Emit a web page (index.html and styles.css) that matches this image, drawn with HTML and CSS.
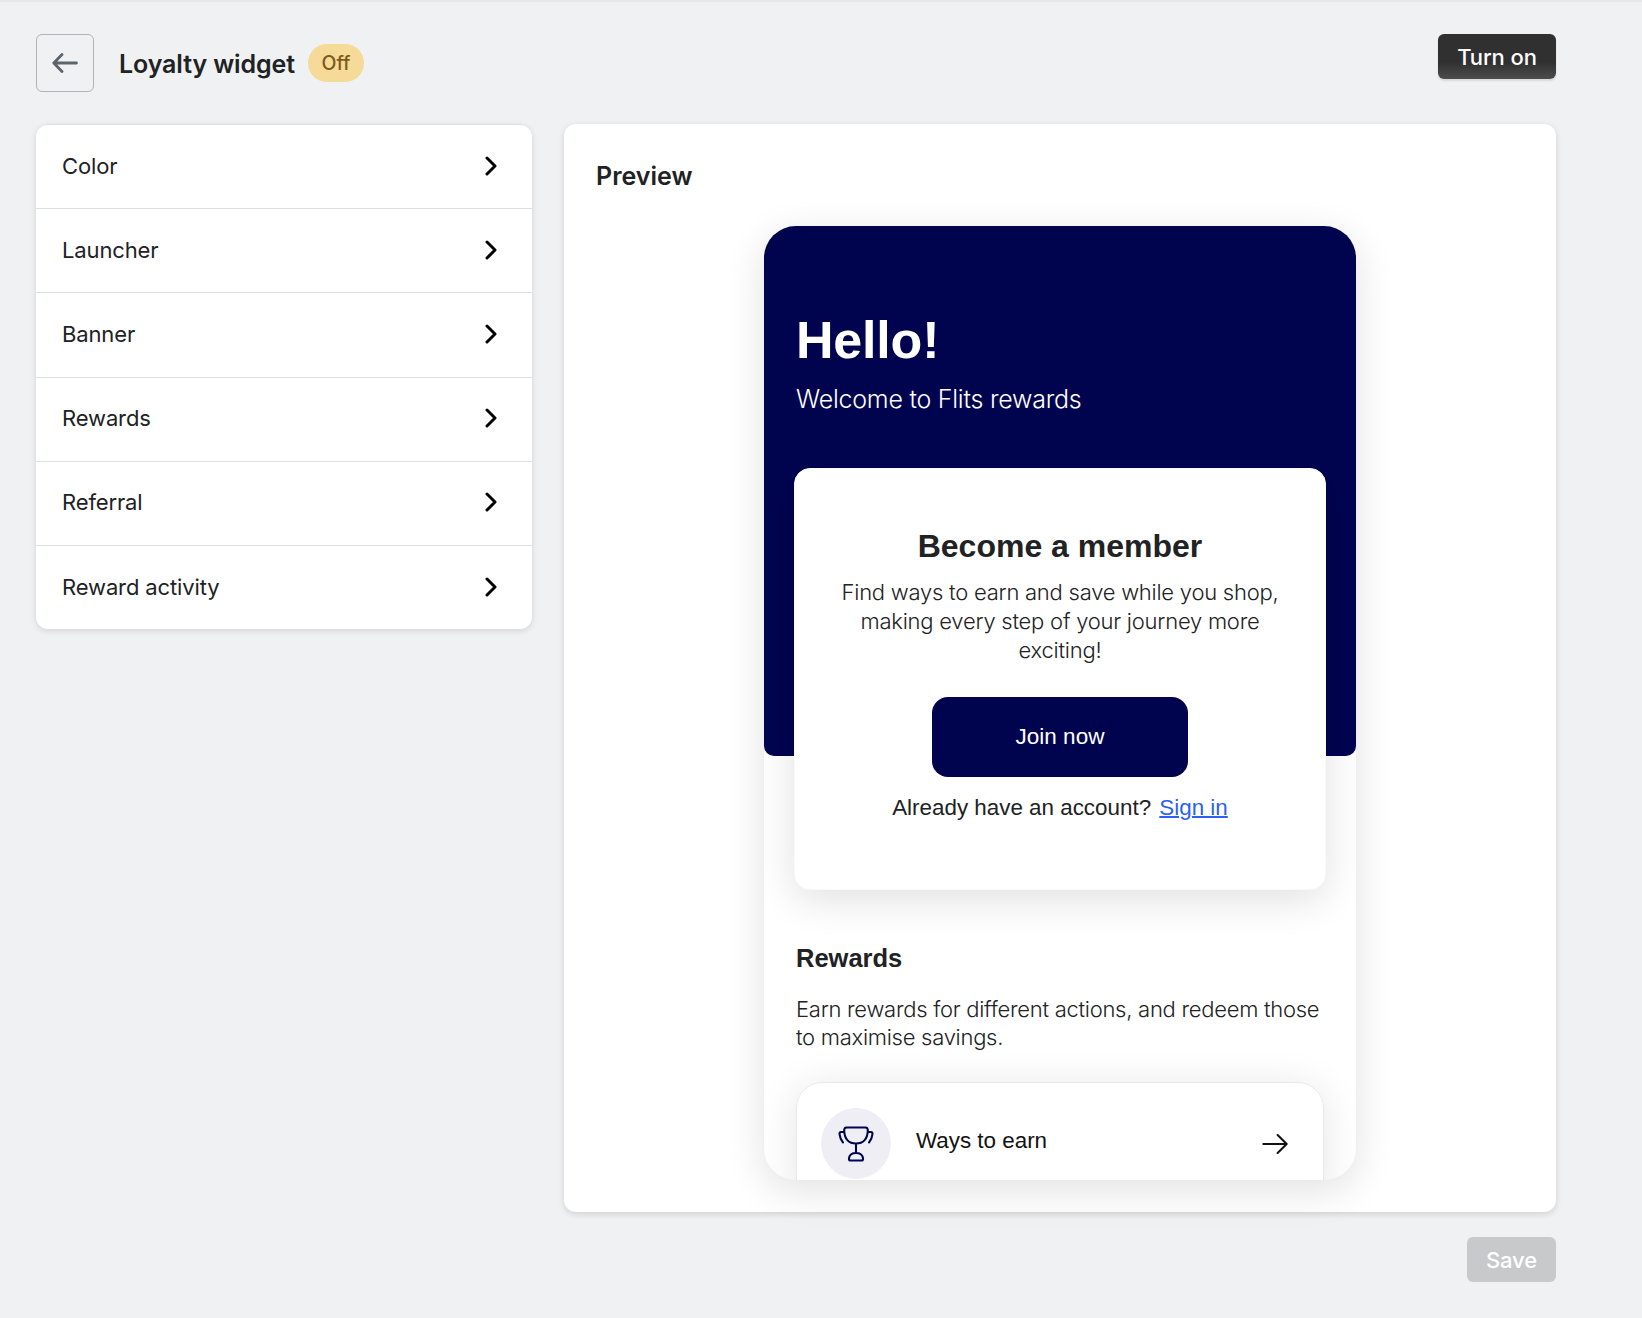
FILE: index.html
```
<!DOCTYPE html>
<html lang="en">
<head>
    <meta charset="UTF-8">
    <title>Loyalty widget</title>
    <link rel="stylesheet" href="styles.css">
</head>
<body>
    <div class="page">
        <header class="header">
            <button class="back" aria-label="Back">
                <svg width="26" height="20" viewBox="0 0 26 20" fill="none" stroke="#5c6470" stroke-width="2.8" stroke-linecap="round" stroke-linejoin="round"><path d="M24.5 10H2M10 1.5L1.8 10L10 18.5"/></svg>
            </button>
            <h1 class="title">Loyalty widget</h1>
            <span class="badge">Off</span>
            <button class="button button-dark">Turn on</button>
        </header>

        <div class="columns">
            <nav class="menu">
                <a class="menu-item">Color <svg class="chevron" viewBox="0 0 12 20"><path d="M2 2L10 10L2 18"/></svg></a>
                <a class="menu-item">Launcher <svg class="chevron" viewBox="0 0 12 20"><path d="M2 2L10 10L2 18"/></svg></a>
                <a class="menu-item">Banner <svg class="chevron" viewBox="0 0 12 20"><path d="M2 2L10 10L2 18"/></svg></a>
                <a class="menu-item">Rewards <svg class="chevron" viewBox="0 0 12 20"><path d="M2 2L10 10L2 18"/></svg></a>
                <a class="menu-item">Referral <svg class="chevron" viewBox="0 0 12 20"><path d="M2 2L10 10L2 18"/></svg></a>
                <a class="menu-item">Reward activity <svg class="chevron" viewBox="0 0 12 20"><path d="M2 2L10 10L2 18"/></svg></a>
            </nav>

            <section class="preview">
                <h2 class="preview-title">Preview</h2>
                <div class="widget">
                    <div class="banner">
                        <h3 class="hello">Hello!</h3>
                        <p class="welcome">Welcome to Flits rewards</p>
                    </div>
                    <div class="member">
                        <h4 class="member-title">Become a member</h4>
                        <p class="member-text">Find ways to earn and save while you shop, making every step of your journey more exciting!</p>
                        <button class="join">Join now</button>
                        <p class="signin">Already have an account? <a class="link" href="#">Sign in</a></p>
                    </div>
                    <div class="rewards">
                        <h4 class="rewards-title">Rewards</h4>
                        <p class="rewards-text">Earn rewards for different actions, and redeem those to maximise savings.</p>
                        <div class="earn">
                            <span class="earn-icon">
                                <svg width="36" height="36" viewBox="0 0 36 36" fill="none" stroke="#00044f" stroke-width="2.1" stroke-linecap="round" stroke-linejoin="round">
                                    <path d="M8.5 1.5H27.5Q30 1.5 29.8 5Q29 17.5 18 17.5Q7 17.5 6.2 5Q6 1.5 8.5 1.5ZM18 17.5V27M11 33V32Q12 27 18 27Q24 27 25 32V33Q25 34.5 23.5 34.5H12.5Q11 34.5 11 33Z"/>
                                    <path d="M6 6H3Q1.5 6 1.5 8Q2 13 5 16.500M30 6H33Q34.5 6 34.5 8Q34 13 31 16.5"/>
                                </svg>
                            </span>
                            <span class="earn-label">Ways to earn</span>
                            <svg class="arrow" width="28" height="22" viewBox="0 0 28 22" fill="none" stroke="#121212" stroke-width="2" stroke-linecap="round" stroke-linejoin="round"><path d="M2.3 11H25.5M16.600 2L25.700 11L16.600 20"/></svg>
                        </div>
                    </div>
                </div>
            </section>
        </div>

        <footer class="footer">
            <button class="button button-disabled" disabled>Save</button>
        </footer>
    </div>
</body>
</html>
```
FILE: styles.css
```
* {
    box-sizing: border-box;
}
body {
    font-family: Inter, sans-serif;
    background: #f0f1f3;
    color: #202223;
    margin: 0;
    border-top: 2px solid #e7e8ea;
}
h1, h2, h3, h4, p {
    margin: 0;
}
button {
    font-family: inherit;
    padding: 0;
}
.page {
    padding: 32px 86px 0 36px;
}
.header {
    display: flex;
    height: 90px;
}
.back {
    width: 58px;
    height: 58px;
    display: flex;
    align-items: center;
    justify-content: center;
    background: transparent;
    border: 1px solid #aeb4bb;
    border-radius: 6px;
}
.title {
    width: 189px;
    font-size: 25px;
    font-weight: 600;
    line-height: 38px;
    letter-spacing: -0.1px;
    margin: 11px 0 0 25px;
}
.badge {
    width: 56px;
    height: 38px;
    margin-top: 10px;
    border-radius: 19px;
    background: #f5da98;
    color: #7d5a1c;
    font-size: 19.5px;
    font-weight: 500;
    line-height: 38px;
    text-align: center;
}
.button {
    height: 45px;
    border: 0;
    border-radius: 6px;
    color: #fff;
    font-size: 22px;
    font-weight: 500;
    letter-spacing: -0.1px;
}
.button-dark {
    width: 118px;
    margin-left: auto;
    background: linear-gradient(#303030 63%, #4d4d4d);
    box-shadow: 0 2px 2px rgba(0, 0, 0, 0.1);
}
.button-disabled {
    width: 89px;
    background: #c8c9cb;
}
.columns {
    display: flex;
    align-items: flex-start;
    gap: 32px;
}
.menu {
    width: 496px;
    background: #fff;
    border-radius: 12px;
    box-shadow: 0 2px 6px rgba(0, 0, 0, 0.12);
}
.menu-item {
    display: flex;
    align-items: center;
    justify-content: space-between;
    height: 84.2px;
    padding: 0 35px 2px 26px;
    border-top: 1px solid #dcdee2;
    font-size: 22px;
    letter-spacing: -0.13px;
}
.menu-item:first-child {
    border-radius: 12px 12px 0 0;
}
.chevron {
    width: 12px;
    height: 20px;
    fill: none;
    stroke: #000;
    stroke-width: 3;
    stroke-linecap: round;
    stroke-linejoin: round;
}
.preview {
    flex: 1;
    height: 1088px;
    padding: 32px;
    background: #fff;
    border-radius: 12px;
    box-shadow: 0 2px 6px rgba(0, 0, 0, 0.14);
}
.preview-title {
    font-size: 25px;
    font-weight: 600;
    line-height: 40px;
}
.widget {
    width: 592px;
    height: 954px;
    margin: 30px auto 0;
    overflow: hidden;
    background: #fff;
    border-radius: 32px;
    box-shadow: 0 10px 40px rgba(0, 0, 0, 0.12);
    font-family: "Liberation Sans", Arial, sans-serif;
}
.banner {
    height: 530px;
    padding: 84px 32px 0;
    background: #00044f;
    border-radius: 0 0 10px 10px;
    color: #fff;
}
.hello {
    font-size: 52px;
    line-height: 60px;
    letter-spacing: -0.2px;
}
.welcome {
    margin-top: 13px;
    font-family: Inter, sans-serif;
    font-size: 25px;
    font-weight: 300;
    line-height: 32px;
    letter-spacing: -0.24px;
}
.member {
    width: 532px;
    height: 422px;
    margin: -288px auto 0;
    padding: 57px 40px 0;
    background: #fff;
    border: 1px solid #fafafa;
    border-radius: 16px;
    box-shadow: 0 10px 40px rgba(0, 0, 0, 0.12);
    text-align: center;
}
.member-title {
    font-size: 32px;
    line-height: 40px;
}
.member-text {
    margin-top: 12px;
    font-family: Inter, sans-serif;
    font-size: 22px;
    font-weight: 300;
    line-height: 29px;
    letter-spacing: -0.24px;
}
.join {
    width: 256px;
    height: 80px;
    margin-top: 32px;
    border: 0;
    border-radius: 16px;
    background: #00044f;
    color: #fff;
    font-size: 22.5px;
}
.signin {
    margin-top: 16px;
    font-size: 22.4px;
    line-height: 30px;
}
.link {
    margin-left: 2px;
    color: #2c5ff5;
    text-decoration: underline;
    text-decoration-thickness: 2px;
}
.rewards {
    padding: 48px 32px 0;
}
.rewards-title {
    font-size: 25.5px;
    line-height: 40px;
}
.rewards-text {
    margin-top: 17px;
    font-family: Inter, sans-serif;
    font-size: 22px;
    font-weight: 300;
    line-height: 28px;
    letter-spacing: -0.27px;
}
.earn {
    display: flex;
    align-items: flex-start;
    height: 130px;
    margin-top: 31px;
    padding: 25px 34px 0 24px;
    border: 1px solid #e8e8ea;
    border-radius: 26px;
    box-shadow: 0 4px 40px rgba(0, 0, 0, 0.1);
}
.earn-icon {
    display: flex;
    align-items: center;
    justify-content: center;
    width: 70px;
    height: 71px;
    border-radius: 50%;
    background: #efeef4;
}
.earn-label {
    flex: 1;
    margin: 18px 0 0 25px;
    color: #121212;
    font-size: 22.4px;
    line-height: 30px;
}
.arrow {
    margin-top: 25px;
}
.footer {
    display: flex;
    justify-content: flex-end;
    padding-top: 25px;
}
```
